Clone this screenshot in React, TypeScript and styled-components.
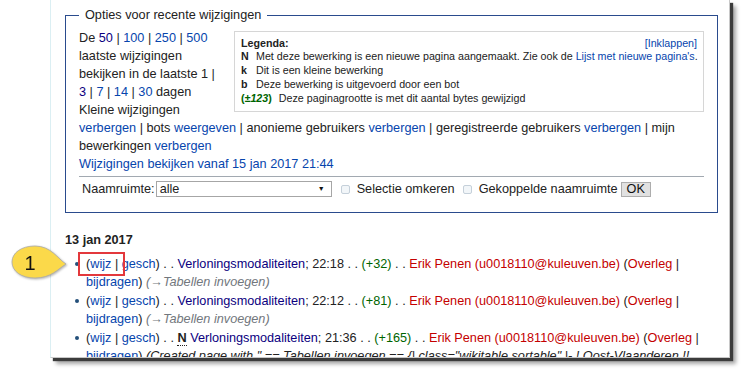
import React from 'react';
import styled, { createGlobalStyle } from 'styled-components';

const GlobalStyle = createGlobalStyle`
  html, body { margin: 0; padding: 0; background: #fff; }
  body { font-family: "Liberation Sans", Arial, sans-serif; color: #222; }
`;

const Page = styled.div`
  position: relative;
  width: 742px;
  height: 371px;
  overflow: hidden;
  background: #fff;
  padding-left: 50px;
  box-sizing: border-box;
`;

const Panel = styled.div`
  box-sizing: border-box;
  width: 680px;
  height: 358px;
  background: #fff;
  border-left: 1px solid #dbeff3;
  border-right: 1px solid #c8c8c8;
  border-bottom: 1px solid #c8c8c8;
  box-shadow: 3px 3px 1px #3c3c3c, 6px 6px 4px rgba(0, 0, 0, 0.35);
  padding: 6px 11px 0 14px;
  overflow: hidden;
  font-size: 12.7px;
  line-height: 18px;
`;

const Options = styled.fieldset`
  margin: 0;
  min-width: 0;
  border: 1px solid #2a4b8d;
  padding: 5px 13px 14px 13px;
`;

const OptionsLegend = styled.legend`
  padding: 0 6px;
  font-size: 12.7px;
  line-height: 18px;
  color: #222;
`;

const TopRow = styled.div`
  display: flex;
  align-items: flex-start;
`;

const LeftCol = styled.div`
  width: 157px;
`;

const Line = styled.div`
  white-space: nowrap;
`;

const Link = styled.a<{ $tone?: 'normal' | 'visited' | 'new' }>`
  text-decoration: none;
  cursor: pointer;
  color: ${(p) => (p.$tone === 'visited' ? '#0b0080' : p.$tone === 'new' ? '#c40000' : '#0645ad')};
`;

const LegendBox = styled.div`
  box-sizing: border-box;
  margin-left: auto;
  margin-top: 2px;
  width: 470px;
  border: 1px solid #d6d6d6;
  background: #fff;
  padding: 4.5px 6px 5.25px 6px;
  font-size: 10.7px;
  line-height: 13.85px;
`;

const LegendHead = styled.div`
  display: flex;
  justify-content: space-between;
`;

const Strong = styled.span`
  font-weight: bold;
`;

const LegendRow = styled.div`
  display: flex;
  white-space: nowrap;
`;

const Term = styled.span<{ $green?: boolean }>`
  font-weight: bold;
  min-width: 8px;
  margin-right: 7px;
  color: ${(p) => (p.$green ? '#006400' : '#222')};
`;

const Em = styled.i``;

const Rule = styled.div`
  margin-top: 3px;
  height: 1px;
  background: #a2a9b1;
`;

const NsRow = styled.div`
  margin-top: 3px;
  height: 18px;
  display: flex;
  align-items: center;
  padding-left: 3px;
  white-space: nowrap;
`;

const Label = styled.span``;

const SelectBox = styled.div`
  box-sizing: border-box;
  width: 176px;
  height: 16px;
  margin-left: 1px;
  border: 1px solid #a6a6a6;
  background: #fff;
  display: flex;
  align-items: center;
  justify-content: space-between;
  padding: 0 6px 0 3px;
  line-height: 14px;
`;

const Arrow = styled.span`
  font-size: 7px;
  color: #111;
`;

const Check = styled.span<{ $gap: number }>`
  box-sizing: border-box;
  width: 9px;
  height: 9px;
  margin-left: ${(p) => p.$gap}px;
  margin-right: 7px;
  border: 1px solid #c5d0da;
  border-radius: 2px;
  background: #f2f6f9;
`;

const OkButton = styled.button`
  box-sizing: border-box;
  margin-left: 3px;
  height: 15px;
  padding: 0 5px;
  border: 1px solid #adadad;
  background: #e1e1e1;
  font-family: inherit;
  font-size: 12.7px;
  line-height: 13px;
  color: #111;
`;

const DayHeading = styled.h4`
  margin: 18px 0 6px 0;
  font-size: 12.7px;
  line-height: 18px;
  font-weight: bold;
`;

const Changes = styled.ul`
  margin: 0;
  padding: 0;
  list-style: none;
`;

const Change = styled.li`
  position: relative;
  padding-left: 21px;
  margin-bottom: 1px;
  line-height: 18px;

  &::before {
    content: '';
    position: absolute;
    left: 10px;
    top: 7px;
    width: 4px;
    height: 4px;
    border-radius: 50%;
    background: #24507a;
  }
`;

const Plus = styled.span`
  color: #006400;
`;

const Summary = styled.span<{ $muted?: boolean }>`
  font-style: italic;
  color: ${(p) => (p.$muted ? '#72777d' : '#222')};
`;

const NewFlag = styled.abbr`
  font-weight: bold;
  text-decoration: none;
  border-bottom: 1px dotted #222;
`;

const Callout = styled.svg`
  position: absolute;
  left: 11px;
  top: 245px;
  width: 56px;
  height: 34px;
  overflow: visible;
  filter: drop-shadow(1px 1px 1px rgba(0, 0, 0, 0.3));
`;

const Highlight = styled.div`
  position: absolute;
  left: 78px;
  top: 252px;
  width: 47px;
  height: 24px;
  box-sizing: border-box;
  border: 2px solid #e3383c;
`;

type Row = { time: string; size: string; isNew?: boolean; summary: React.ReactNode; muted?: boolean };

const rows: Row[] = [
  { time: '22:18', size: '+32', summary: '(→Tabellen invoegen)', muted: true },
  { time: '22:12', size: '+81', summary: '(→Tabellen invoegen)', muted: true },
  {
    time: '21:36',
    size: '+165',
    isNew: true,
    summary: '(Created page with " == Tabellen invoegen == {| class="wikitable sortable" |- ! Oost-Vlaanderen !!',
  },
];

export default function App() {
  return (
    <>
      <GlobalStyle />
      <Page>
        <Panel>
          <Options>
            <OptionsLegend>Opties voor recente wijzigingen</OptionsLegend>
            <TopRow>
              <LeftCol>
                <Line>
                  De <Link $tone="visited">50</Link> | <Link>100</Link> | <Link>250</Link> | <Link>500</Link>
                </Line>
                <Line>laatste wijzigingen</Line>
                <Line>bekijken in de laatste 1 |</Line>
                <Line>
                  <Link $tone="visited">3</Link> | <Link>7</Link> | <Link>14</Link> | <Link>30</Link> dagen
                </Line>
                <Line>Kleine wijzigingen</Line>
              </LeftCol>
              <LegendBox>
                <LegendHead>
                  <Strong>Legenda:</Strong>
                  <Link>[Inklappen]</Link>
                </LegendHead>
                <LegendRow>
                  <Term>N</Term>
                  <span>
                    Met deze bewerking is een nieuwe pagina aangemaakt. Zie ook de <Link>Lijst met nieuwe pagina's</Link>.
                  </span>
                </LegendRow>
                <LegendRow>
                  <Term>k</Term>
                  <span>Dit is een kleine bewerking</span>
                </LegendRow>
                <LegendRow>
                  <Term>b</Term>
                  <span>Deze bewerking is uitgevoerd door een bot</span>
                </LegendRow>
                <LegendRow>
                  <Term $green>
                    (<Em>±123</Em>)
                  </Term>
                  <span>Deze paginagrootte is met dit aantal bytes gewijzigd</span>
                </LegendRow>
              </LegendBox>
            </TopRow>
            <Line>
              <Link>verbergen</Link> | bots <Link>weergeven</Link> | anonieme gebruikers <Link>verbergen</Link> |
              geregistreerde gebruikers <Link>verbergen</Link> | mijn
            </Line>
            <Line>
              bewerkingen <Link>verbergen</Link>
            </Line>
            <Line>
              <Link>Wijzigingen bekijken vanaf 15 jan 2017 21:44</Link>
            </Line>
            <Rule />
            <NsRow>
              <Label>Naamruimte:</Label>
              <SelectBox>
                <span>alle</span>
                <Arrow>▼</Arrow>
              </SelectBox>
              <Check $gap={9} />
              <Label>Selectie omkeren</Label>
              <Check $gap={8} />
              <Label>Gekoppelde naamruimte</Label>
              <OkButton>OK</OkButton>
            </NsRow>
          </Options>

          <DayHeading>13 jan 2017</DayHeading>
          <Changes>
            {rows.map((r, i) => (
              <Change key={i}>
                (<Link>wijz</Link> | <Link>gesch</Link>) . .{' '}
                {r.isNew && (
                  <>
                    <NewFlag title="nieuwe pagina">N</NewFlag>{' '}
                  </>
                )}
                <Link $tone="visited">Verloningsmodaliteiten</Link>; {r.time} . . <Plus>({r.size})</Plus> . .{' '}
                <Link $tone="new">Erik Penen (u0018110@kuleuven.be)</Link> (<Link $tone="new">Overleg</Link> |{' '}
                <Link>bijdragen</Link>) <Summary $muted={r.muted}>{r.summary}</Summary>
              </Change>
            ))}
          </Changes>
        </Panel>

        <Callout viewBox="0 0 56 34">
          <path
            d="M55 19 C47 14 40 1 24 1 C10 1 1 8 1 17 C1 26 10 33 24 33 C40 33 47 24 55 19 Z"
            fill="#fbd94a"
            stroke="#a9a9a9"
            strokeWidth="0.8"
          />
          <text x="19" y="25" fontSize="20" fontFamily="Liberation Sans, Arial, sans-serif" fill="#111" textAnchor="middle">
            1
          </text>
        </Callout>
        <Highlight />
      </Page>
    </>
  );
}
